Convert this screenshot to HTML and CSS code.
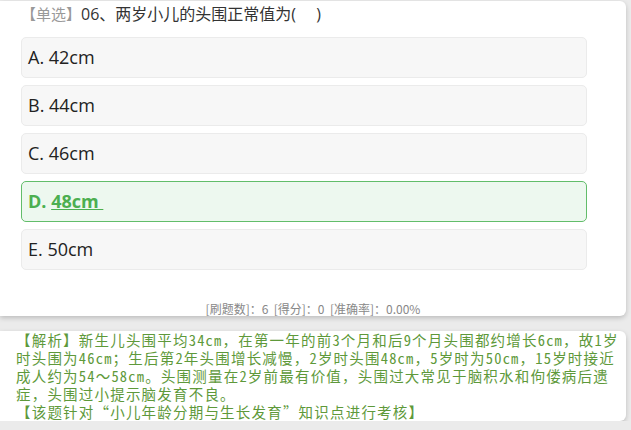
FILE: index.html
```html
<!DOCTYPE html>
<html lang="zh-CN">
<head>
    <meta charset="UTF-8">
    <meta name="viewport" content="width=device-width, initial-scale=1.0">
    <title>刷题 - 单选</title>
    <link rel="stylesheet" href="styles.css">
</head>
<body>
    <div class="page">
        <!-- 题目卡片 -->
        <div class="card question-card">
            <div class="question-title"><span class="q-type">【单选】</span>06、两岁小儿的头围正常值为(　 )</div>

            <ul class="option-list">
                <li class="option">A. 42cm</li>
                <li class="option">B. 44cm</li>
                <li class="option">C. 46cm</li>
                <li class="option right">D. <u>48cm&nbsp;</u></li>
                <li class="option">E. 50cm</li>
            </ul>

            <div class="stats">[刷题数]：6&nbsp; [得分]：0&nbsp; [准确率]：0.00%</div>
        </div>

        <!-- 解析卡片 -->
        <div class="card analysis-card">
            <p>【解析】新生儿头围平均34cm，在第一年的前3个月和后9个月头围都约增长6cm，故1岁时头围为46cm；生后第2年头围增长减慢，2岁时头围48cm，5岁时为50cm，15岁时接近成人约为54～58cm。头围测量在2岁前最有价值，头围过大常见于脑积水和佝偻病后遗症，头围过小提示脑发育不良。</p>
            <p>【该题针对“小儿年龄分期与生长发育”知识点进行考核】</p>
        </div>
    </div>
</body>
</html>
```

FILE: styles.css
```css
/* 基础 */
body {
    margin: 0;
    background-color: #ebebeb;
    font-family: "Open Sans", "Noto Sans CJK SC", sans-serif;
    color: #333;
}

.page {
    width: 626px;
    padding-top: 1px;
}

.card {
    background-color: #fff;
    border-radius: 0 6px 6px 0;
    box-shadow: 0 2px 5px rgba(0, 0, 0, 0.2);
}

/* 题目 */
.question-card {
    padding: 1px 39px 0 21px;
    height: 315px;
    box-sizing: border-box;
}

.question-title {
    font-size: 16px;
    line-height: 24px;
    color: #333;
}

.q-type {
    color: #999;
    font-family: "Noto Sans CJK SC", sans-serif;
    font-size: 15px;
}

.option-list {
    list-style: none;
    margin: 11px 0 0;
    padding: 0;
    display: flex;
    flex-direction: column;
    gap: 7px;
}

.option {
    height: 41px;
    box-sizing: border-box;
    padding-left: 6px;
    line-height: 39px;
    font-size: 18px;
    color: #222;
    background-color: #f7f7f7;
    border: 1px solid #ebebeb;
    border-radius: 5px;
}

.option.right {
    background-color: #edf8ef;
    border-color: #62bd6a;
    color: #4caf50;
    font-weight: bold;
}

.stats {
    margin: 31px -39px 0 -21px;
    line-height: 15px;
    font-size: 12px;
    color: #888;
    text-align: center;
    font-family: "Noto Sans CJK SC", sans-serif;
}

/* 解析 */
.analysis-card {
    margin-top: 15px;
    padding: 0 5px 0 16px;
    font-family: "Noto Sans Mono CJK SC", "Noto Sans CJK SC", monospace;
    font-size: 14.5px;
    letter-spacing: 1.2px;
    line-height: 18px;
    color: #5e993a;
}

.analysis-card p {
    margin: 0;
}
```
